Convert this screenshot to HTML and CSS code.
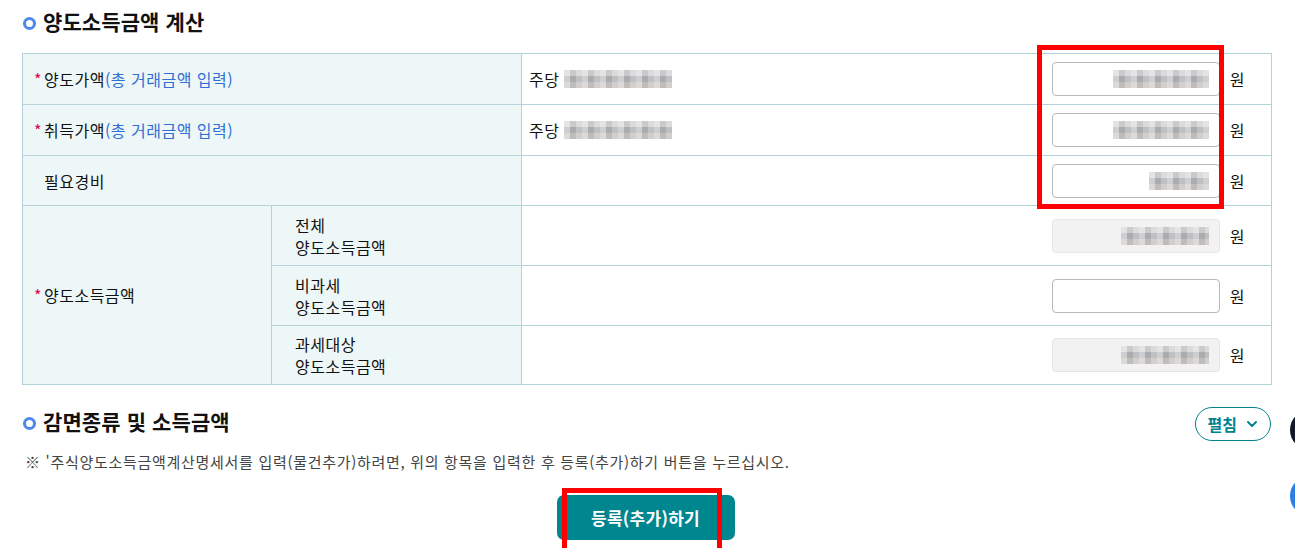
FILE: index.html
```html
<!DOCTYPE html>
<html lang="ko">
<head>
<meta charset="utf-8">
<title>양도소득금액 계산</title>
<link rel="stylesheet" href="styles.css">
</head>
<body>
<div class="page">
  <h2 class="sec-title"><span class="ring"></span>양도소득금액 계산</h2>
  <table class="calc">
    <colgroup><col class="c1"><col class="c2"><col class="c3"></colgroup>
    <tr class="h51">
      <th colspan="2" class="lbl"><span class="req">*</span>양도가액<span class="hint">(총 거래금액 입력)</span></th>
      <td class="val"><div class="vrow"><span class="per">주당 <span class="blur b1"></span></span><span class="field"><span class="inp"><span class="blur b2"></span></span><span class="won">원</span></span></div></td>
    </tr>
    <tr class="h51">
      <th colspan="2" class="lbl"><span class="req">*</span>취득가액<span class="hint">(총 거래금액 입력)</span></th>
      <td class="val"><div class="vrow"><span class="per">주당 <span class="blur b1"></span></span><span class="field"><span class="inp"><span class="blur b2"></span></span><span class="won">원</span></span></div></td>
    </tr>
    <tr class="h50">
      <th colspan="2" class="lbl"><span class="req hide">*</span>필요경비</th>
      <td class="val"><div class="vrow"><span></span><span class="field"><span class="inp"><span class="blur b3"></span></span><span class="won">원</span></span></div></td>
    </tr>
    <tr class="h60">
      <th rowspan="3" class="lbl"><span class="req">*</span>양도소득금액</th>
      <th class="lbl sub">전체<br>양도소득금액</th>
      <td class="val"><div class="vrow"><span></span><span class="field"><span class="inp dis"><span class="blur b4"></span></span><span class="won">원</span></span></div></td>
    </tr>
    <tr class="h60">
      <th class="lbl sub">비과세<br>양도소득금액</th>
      <td class="val"><div class="vrow"><span></span><span class="field"><span class="inp"></span><span class="won">원</span></span></div></td>
    </tr>
    <tr class="h59">
      <th class="lbl sub">과세대상<br>양도소득금액</th>
      <td class="val"><div class="vrow"><span></span><span class="field"><span class="inp dis"><span class="blur b4"></span></span><span class="won">원</span></span></div></td>
    </tr>
  </table>

  <div class="sec2">
    <h2 class="sec-title"><span class="ring"></span>감면종류 및 소득금액</h2>
    <button class="toggle">펼침<svg width="12" height="8" viewBox="0 0 12 8"><path d="M2 2l4 4 4-4" fill="none" stroke="#00838f" stroke-width="2" stroke-linecap="round" stroke-linejoin="round"/></svg></button>
  </div>
  <p class="note">※ '주식양도소득금액계산명세서를 입력(물건추가)하려면, 위의 항목을 입력한 후 등록(추가)하기 버튼을 누르십시오.</p>
  <div class="actions"><button class="submit">등록(추가)하기</button></div>
</div>
<div class="mark m1"></div>
<div class="mark m2"></div>
<div class="fab f1"></div>
<div class="fab f2"></div>
</body>
</html>
```
FILE: styles.css
```css
html, body { margin: 0; padding: 0; background: #fff; overflow: hidden; }
body { font-family: "Noto Sans CJK KR", "Noto Sans", sans-serif; color: #111; }
.page { width: 1249px; padding: 8px 0 0 22px; }
.sec-title { display: flex; align-items: center; margin: 0; font-size: 21px; font-weight: 700; height: 30px; line-height: 1; letter-spacing: 0.1px; box-sizing: border-box; padding-bottom: 3px; }
.ring { width: 7px; height: 7px; border: 3px solid #4c86ef; border-radius: 50%; margin: 3px 7px 0 1px; }
.calc { width: 1249px; border-collapse: collapse; margin-top: 15px; table-layout: fixed; font-size: 16px; letter-spacing: 0.5px; }
.c1 { width: 249px; } .c2 { width: 250px; } .c3 { width: 750px; }
.calc th, .calc td { border: 1px solid #b3d3d8; padding: 0; }
.lbl { background: #eef7f7; text-align: left; font-weight: 400; padding-left: 11px !important; }
.sub { padding-left: 23px !important; line-height: 22px; }
.h51 { height: 51px; } .h50 { height: 50px; } .h60 { height: 60px; } .h59 { height: 59px; }
.req { color: #e0004d; font-size: 16px; margin-right: 2px; }
.hide { visibility: hidden; }
.hint { color: #2f6fd6; }
.val { padding: 0 26px 0 7px !important; }
.vrow { display: flex; justify-content: space-between; align-items: center; }
.per { display: flex; align-items: center; gap: 5px; }
.field { display: flex; align-items: center; gap: 10px; }
.inp { box-sizing: border-box; width: 168px; height: 34px; border: 1px solid #b9b9b9; border-radius: 4px; background: #fff; display: flex; justify-content: flex-end; align-items: center; padding-right: 10px; }
.inp.dis { background: #f2f2f2; border-color: #e6e6e6; }
.blur { display: inline-block; height: 18px; background:
  repeating-linear-gradient(90deg, rgba(255,255,255,0.35) 0 6px, rgba(0,0,0,0.05) 6px 12px, rgba(255,255,255,0.15) 12px 18px),
  repeating-linear-gradient(0deg, #c9c6c4 0 6px, #b3b5b8 6px 12px, #d6d5d6 12px 18px); }
.b1 { width: 108px; }
.b2 { width: 96px; }
.b3 { width: 60px; }
.b4 { width: 88px; }
.sec2 { display: flex; justify-content: space-between; align-items: center; margin-top: 22px; }
.sec2 .sec-title { height: 34px; padding-bottom: 5px; }
.toggle { display: flex; align-items: center; gap: 9px; box-sizing: border-box; height: 34px; padding: 0 12px 0 12px; border: 1px solid #00838f; border-radius: 17px; background: #fff; color: #00838f; font-family: inherit; font-size: 16px; font-weight: 700; }
.note { margin: 10px 0 0 3px; font-size: 15px; letter-spacing: 0.7px; color: #444; }
.actions { display: flex; justify-content: center; margin-top: 23px; padding-right: 2px; }
.submit { width: 178px; height: 45px; border: 0; border-radius: 7px; background: #00868f; color: #fff; font-family: inherit; font-size: 17px; letter-spacing: 0.3px; font-weight: 700; }
.mark { position: absolute; border: 5px solid #ff0000; box-sizing: border-box; }
.m1 { left: 1037px; top: 45px; width: 187px; height: 164px; }
.m2 { left: 562px; top: 488px; width: 160px; height: 70px; }
.fab { position: absolute; left: 1290px; width: 40px; height: 40px; border-radius: 50%; }
.f1 { top: 410px; background: #111827; }
.f2 { top: 476px; background: #2b7de9; }
```
